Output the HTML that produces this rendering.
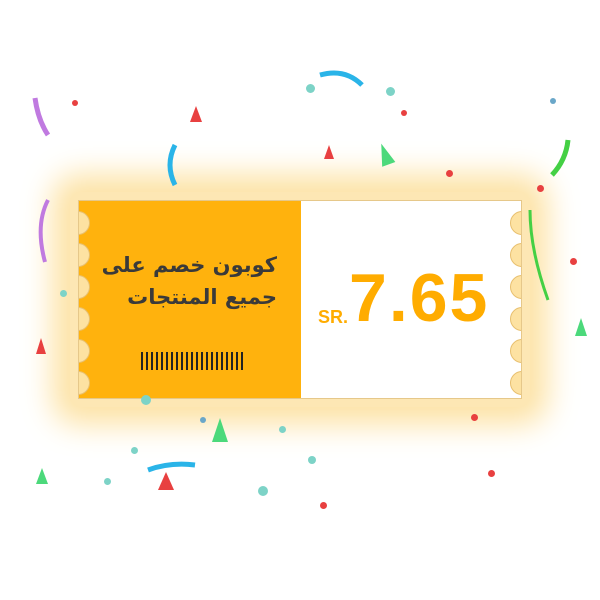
<!DOCTYPE html>
<html><head><meta charset="utf-8"><style>
body{margin:0;width:600px;height:600px;background:#fff;position:relative;overflow:hidden;font-family:"Liberation Sans",sans-serif}
.glow{position:absolute;left:70px;top:192px;width:460px;height:215px;background:#fde7b4;box-shadow:0 0 30px 18px #fde3a6;border-radius:10px}
.cp{position:absolute;left:78px;top:200px;width:444px;height:199px;border:1px solid #e6c88a;box-sizing:border-box;background:#fff;overflow:hidden}
.or{position:absolute;left:0;top:0;width:222px;height:197px;background:#ffb20d}
.sc{position:absolute;width:24px;height:24px;border-radius:50%;background:#fde2a2;border:1px solid #e8c070;box-sizing:border-box}
.ar{position:absolute;text-align:right;font-family:"DejaVu Sans",sans-serif;font-weight:bold;color:#3a3a3a;font-size:21px;direction:rtl}
.bar{position:absolute;left:62px;top:151px;width:104px;height:18px;background:repeating-linear-gradient(90deg,#222 0 2px,transparent 2px 5px)}
.num{position:absolute;left:270px;top:58px;font-size:68px;font-weight:bold;color:#ffac00;letter-spacing:2px}
.sr{position:absolute;left:239px;top:106px;font-size:18px;font-weight:bold;color:#ffac00}
.c{position:absolute;border-radius:50%}
</style></head><body>
<div class="glow"></div>
<div class="cp">
<div class="or"></div>
<div class="sc" style="left:-13px;top:10px"></div><div class="sc" style="left:-13px;top:42px"></div><div class="sc" style="left:-13px;top:74px"></div><div class="sc" style="left:-13px;top:106px"></div><div class="sc" style="left:-13px;top:138px"></div><div class="sc" style="left:-13px;top:170px"></div>
<div class="sc" style="right:-13px;top:10px"></div><div class="sc" style="right:-13px;top:42px"></div><div class="sc" style="right:-13px;top:74px"></div><div class="sc" style="right:-13px;top:106px"></div><div class="sc" style="right:-13px;top:138px"></div><div class="sc" style="right:-13px;top:170px"></div>
<div class="ar" style="left:10px;top:52px;width:188px">كوبون خصم على</div>
<div class="ar" style="left:10px;top:84px;width:188px">جميع المنتجات</div>
<div class="bar"></div>
<div class="sr">SR.</div>
<div class="num">7.65</div>
</div>
<div class="c" style="left:72px;top:100px;width:6px;height:6px;background:#e84040"></div>
<div class="c" style="left:306px;top:84px;width:9px;height:9px;background:#7dd3c7"></div>
<div class="c" style="left:386px;top:87px;width:9px;height:9px;background:#7dd3c7"></div>
<div class="c" style="left:401px;top:110px;width:6px;height:6px;background:#e84040"></div>
<div class="c" style="left:446px;top:170px;width:7px;height:7px;background:#e84040"></div>
<div class="c" style="left:537px;top:185px;width:7px;height:7px;background:#e84040"></div>
<div class="c" style="left:570px;top:258px;width:7px;height:7px;background:#e84040"></div>
<div class="c" style="left:471px;top:414px;width:7px;height:7px;background:#e84040"></div>
<div class="c" style="left:488px;top:470px;width:7px;height:7px;background:#e84040"></div>
<div class="c" style="left:320px;top:502px;width:7px;height:7px;background:#e84040"></div>
<div class="c" style="left:258px;top:486px;width:10px;height:10px;background:#7dd3c7"></div>
<div class="c" style="left:141px;top:395px;width:10px;height:10px;background:#7dd3c7"></div>
<div class="c" style="left:308px;top:456px;width:8px;height:8px;background:#7dd3c7"></div>
<div class="c" style="left:279px;top:426px;width:7px;height:7px;background:#7dd3c7"></div>
<div class="c" style="left:131px;top:447px;width:7px;height:7px;background:#7dd3c7"></div>
<div class="c" style="left:104px;top:478px;width:7px;height:7px;background:#7dd3c7"></div>
<div class="c" style="left:60px;top:290px;width:7px;height:7px;background:#7dd3c7"></div>
<div class="c" style="left:550px;top:98px;width:6px;height:6px;background:#6aa7c9"></div>
<div class="c" style="left:200px;top:417px;width:6px;height:6px;background:#6aa7c9"></div>
<div style="position:absolute;left:378px;top:143px;width:0;height:0;border-left:7px solid transparent;border-right:7px solid transparent;border-bottom:22px solid #4cd97b;transform:rotate(-20deg)"></div>
<div style="position:absolute;left:212px;top:418px;width:0;height:0;border-left:8px solid transparent;border-right:8px solid transparent;border-bottom:24px solid #4cd97b"></div>
<div style="position:absolute;left:575px;top:318px;width:0;height:0;border-left:6px solid transparent;border-right:6px solid transparent;border-bottom:18px solid #4cd97b"></div>
<div style="position:absolute;left:36px;top:468px;width:0;height:0;border-left:6px solid transparent;border-right:6px solid transparent;border-bottom:16px solid #4cd97b"></div>
<div style="position:absolute;left:190px;top:106px;width:0;height:0;border-left:6px solid transparent;border-right:6px solid transparent;border-bottom:16px solid #e84040"></div>
<div style="position:absolute;left:36px;top:338px;width:0;height:0;border-left:5px solid transparent;border-right:5px solid transparent;border-bottom:16px solid #e84040"></div>
<div style="position:absolute;left:158px;top:472px;width:0;height:0;border-left:8px solid transparent;border-right:8px solid transparent;border-bottom:18px solid #e84040"></div>
<div style="position:absolute;left:324px;top:145px;width:0;height:0;border-left:5px solid transparent;border-right:5px solid transparent;border-bottom:14px solid #e84040"></div>
<svg style="position:absolute;left:0;top:0" width="600" height="600">
<path d="M320 75 Q345 68 362 85" stroke="#2ab4e8" stroke-width="5" fill="none"/>
<path d="M175 145 Q165 165 175 185" stroke="#2ab4e8" stroke-width="5" fill="none"/>
<path d="M148 470 Q170 462 195 465" stroke="#2ab4e8" stroke-width="5" fill="none"/>
<path d="M35 98 Q38 120 48 135" stroke="#c07ae0" stroke-width="5" fill="none"/>
<path d="M48 200 Q35 225 45 262" stroke="#c07ae0" stroke-width="4" fill="none"/>
<path d="M568 140 Q566 160 552 175" stroke="#44d044" stroke-width="5" fill="none"/>
<path d="M530 210 Q530 250 548 300" stroke="#44d044" stroke-width="3" fill="none"/>
</svg>
</body></html>
